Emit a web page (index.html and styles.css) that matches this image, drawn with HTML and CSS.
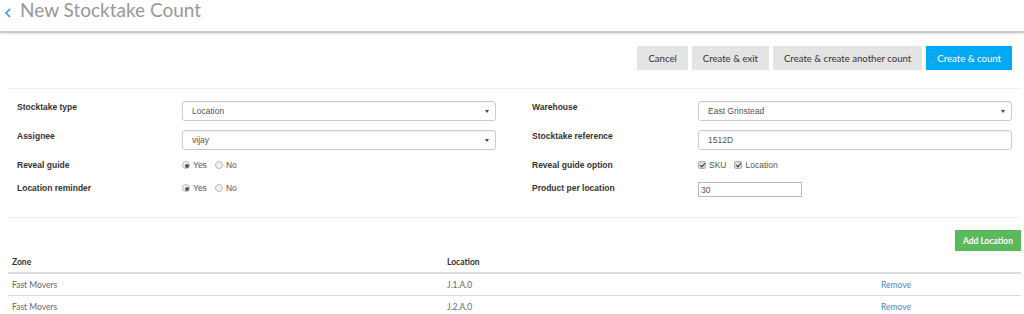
FILE: index.html
```html
<!DOCTYPE html>
<html lang="en">

<head>
  <meta charset="UTF-8">
  <meta name="viewport" content="width=device-width, initial-scale=1.0">
  <title>New Stocktake Count</title>
  <link rel="stylesheet" href="styles.css">
</head>

<body>

  <div class="page-header">
    <a class="back-link" href="#">
      <svg width="8" height="10" viewBox="0 0 8 10">
        <polyline points="6,1 2,5 6,9" fill="none" stroke="#2a9df4" stroke-width="1.6" />
      </svg>
    </a>
    <h1 class="page-title">New Stocktake Count</h1>
  </div>

  <div class="content">
    <!-- Actions -->
    <div class="toolbar">
      <button type="button" class="btn">Cancel</button>
      <button type="button" class="btn">Create &amp; exit</button>
      <button type="button" class="btn">Create &amp; create another count</button>
      <button type="button" class="btn btn-primary">Create &amp; count</button>
    </div>

    <!-- Stocktake details -->
    <form class="form-grid">
      <label class="field-label">Stocktake type</label>
      <div class="field">
        <div class="select-box">Location</div>
      </div>
      <label class="field-label right">Warehouse</label>
      <div class="field">
        <div class="select-box">East Grinstead</div>
      </div>

      <label class="field-label">Assignee</label>
      <div class="field">
        <div class="select-box">vijay</div>
      </div>
      <label class="field-label right">Stocktake reference</label>
      <div class="field">
        <input type="text" class="text-box" value="1512D">
      </div>

      <label class="field-label">Reveal guide</label>
      <div class="field options">
        <label class="option"><input type="radio" name="guide" checked> Yes</label>
        <label class="option"><input type="radio" name="guide"> No</label>
      </div>
      <label class="field-label right">Reveal guide option</label>
      <div class="field options">
        <label class="option"><input type="checkbox" checked> SKU</label>
        <label class="option"><input type="checkbox" checked> Location</label>
      </div>

      <label class="field-label">Location reminder</label>
      <div class="field options">
        <label class="option"><input type="radio" name="reminder" checked> Yes</label>
        <label class="option"><input type="radio" name="reminder"> No</label>
      </div>
      <label class="field-label right">Product per location</label>
      <div class="field">
        <input type="text" class="small-input" value="30">
      </div>
    </form>

    <!-- Locations -->
    <div class="locations">
      <div class="locations-actions">
        <button type="button" class="btn btn-success">Add Location</button>
      </div>
      <table class="location-table">
        <thead>
          <tr>
            <th class="col-zone">Zone</th>
            <th class="col-location">Location</th>
            <th></th>
          </tr>
        </thead>
        <tbody>
          <tr>
            <td>Fast Movers</td>
            <td>J.1.A.0</td>
            <td><a href="#">Remove</a></td>
          </tr>
          <tr>
            <td>Fast Movers</td>
            <td>J.2.A.0</td>
            <td><a href="#">Remove</a></td>
          </tr>
        </tbody>
      </table>
    </div>
  </div>

</body>

</html>
```

FILE: styles.css
```css
html,
body {
  overflow: hidden;
}

body {
  margin: 0;
  font-family: Lato, "Open Sans", sans-serif;
  background-color: #fff;
  color: #555;
}

.page-header {
  display: flex;
  align-items: flex-start;
  height: 31px;
  border-bottom: 2px solid #cbcbcb;
  box-shadow: 0 1px 2px rgba(0, 0, 0, 0.12);
}

.back-link {
  display: flex;
  padding: 8px 6px 0 4px;
}

.page-title {
  margin: 0 0 0 2px;
  font-size: 19px;
  font-weight: normal;
  line-height: 20px;
  color: #999;
}

.content {
  padding: 0 3px 0 8px;
}

.toolbar {
  display: flex;
  justify-content: flex-end;
  gap: 4px;
  padding: 13px 9px 18px 0;
  border-bottom: 1px solid #eee;
}

.btn {
  height: 24px;
  padding: 0 11px;
  border: none;
  background-color: #e4e4e4;
  color: #333;
  font-family: Lato, sans-serif;
  font-size: 9.6px;
  cursor: pointer;
}

.btn-primary {
  background-color: #04a9f5;
  color: #fff;
}

.btn-success {
  height: 21px;
  padding: 0 8px;
  background-color: #5cb85c;
  color: #fff;
  font-size: 8.5px;
  font-weight: bold;
}

/* Form */
.form-grid {
  display: grid;
  grid-template-columns: 165px 314px 202px 314px;
  grid-template-rows: 20px 20px 14px 15px;
  row-gap: 9px;
  align-items: start;
  margin: 0;
  padding: 12px 9px 20px 9px;
  border-bottom: 1px solid #eee;
  font-family: "Liberation Sans", Arial, sans-serif;
}

.field-label {
  padding-top: 1px;
  font-size: 8.5px;
  line-height: 10px;
  font-weight: bold;
  color: #333;
}

.field-label.right {
  margin-left: 36px;
}

.field {
  display: flex;
  align-items: center;
}

.select-box,
.text-box {
  position: relative;
  box-sizing: border-box;
  width: 100%;
  height: 20px;
  padding: 0 9px;
  border: 1px solid #ccc;
  border-radius: 3px;
  box-shadow: inset 0 1px 1px rgba(0, 0, 0, 0.05);
  font-family: "Liberation Sans", Arial, sans-serif;
  font-size: 8.5px;
  line-height: 18px;
  color: #555;
  background-color: #fff;
}

.select-box::after {
  content: "";
  position: absolute;
  right: 6px;
  top: 8px;
  border-left: 2px solid transparent;
  border-right: 2px solid transparent;
  border-top: 3px solid #444;
}

.small-input {
  box-sizing: border-box;
  width: 104px;
  height: 15px;
  padding: 0 2px;
  border: 1px solid #bbb;
  font-family: "Liberation Sans", Arial, sans-serif;
  font-size: 8.5px;
  color: #555;
}

.options {
  gap: 8px;
  height: 10px;
  margin-top: 1px;
}

.option {
  display: flex;
  align-items: center;
  gap: 3px;
  font-size: 8.5px;
  color: #555;
}

.option input {
  appearance: none;
  -webkit-appearance: none;
  position: relative;
  margin: 0;
  width: 8px;
  height: 8px;
  border: 1px solid #b8b8b8;
  background-color: #f2f2f2;
}

.option input[type="radio"] {
  border-radius: 50%;
}

.option input[type="radio"]:checked::after {
  content: "";
  position: absolute;
  left: 2px;
  top: 2px;
  width: 4px;
  height: 4px;
  border-radius: 50%;
  background-color: #555;
}

.option input[type="checkbox"] {
  border-radius: 2px;
  background-color: #ddd;
  border-color: #aaa;
}

.option input[type="checkbox"]:checked::after {
  content: "";
  position: absolute;
  left: 2px;
  top: 0;
  width: 2px;
  height: 4px;
  border-right: 1.3px solid #333;
  border-bottom: 1.3px solid #333;
  transform: rotate(40deg);
}

/* Locations table */
.locations {
  padding-top: 12px;
}

.locations-actions {
  display: flex;
  justify-content: flex-end;
}

.location-table {
  width: 100%;
  border-collapse: collapse;
  font-size: 8.5px;
}

.location-table th {
  height: 21px;
  padding: 0 4px;
  text-align: left;
  color: #333;
  border-bottom: 2px solid #ddd;
}

.location-table td {
  height: 21px;
  padding: 0 4px;
  color: #666;
  border-bottom: 1px solid #ddd;
}

.col-zone {
  width: 427px;
}

.col-location {
  width: 426px;
}

.location-table a {
  color: #4a86c5;
  text-decoration: none;
}
```
